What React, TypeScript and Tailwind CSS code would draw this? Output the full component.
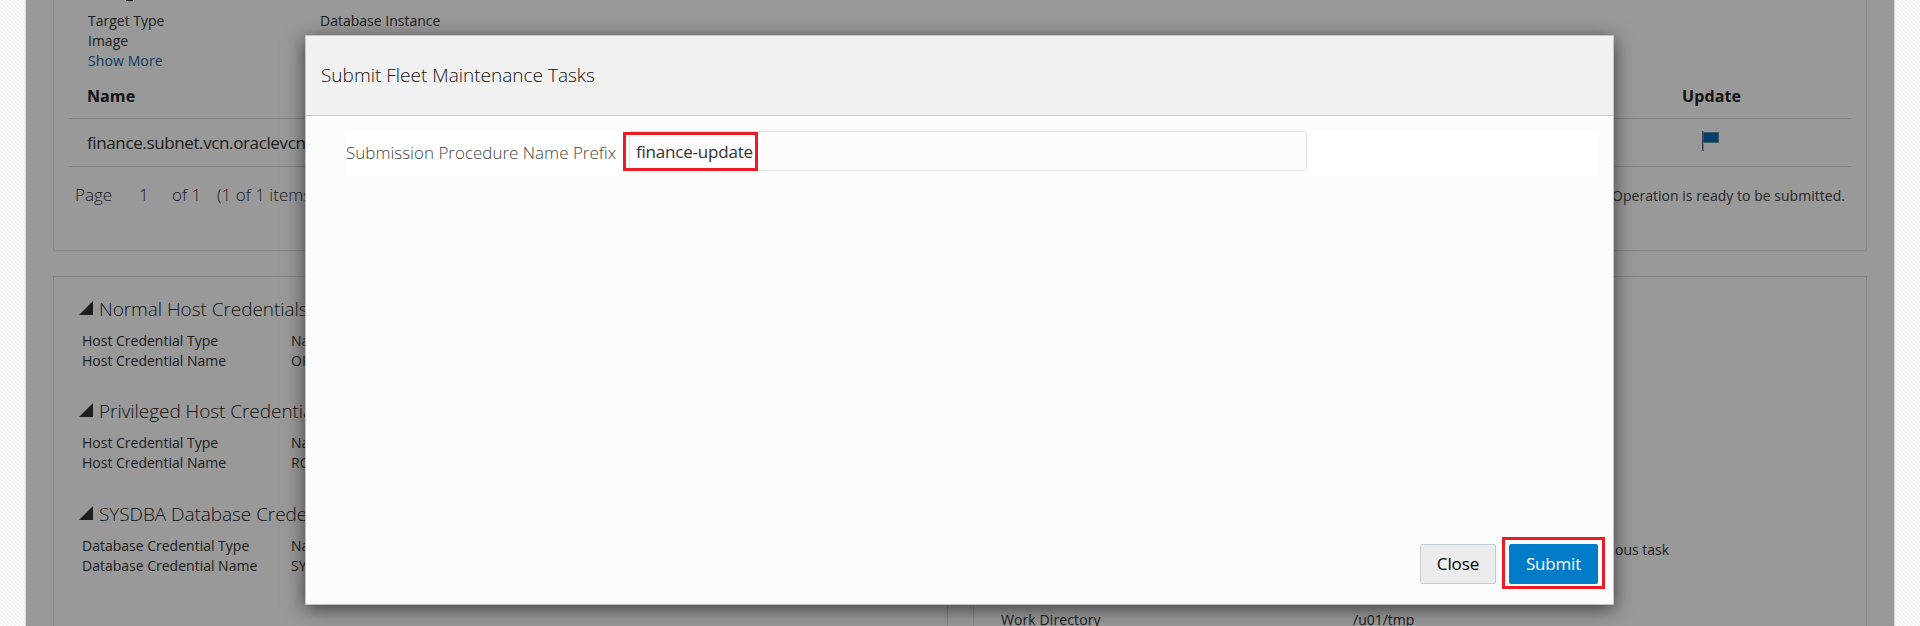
import React from "react";

type Pair = { label: string; value: string };

function Row({ label, value, labelWidth }: Pair & { labelWidth: string }) {
  return (
    <div className="flex h-5 text-[14px] leading-5 text-[#333]">
      <span className={`shrink-0 ${labelWidth}`}>{label}</span>
      <span>{value}</span>
    </div>
  );
}

function Section({ title, rows }: { title: string; rows: Pair[] }) {
  return (
    <section>
      <h2 className="flex h-7 items-center text-[19px] leading-7 font-light tracking-[-0.05px] text-[#222]">
        <svg className="mr-[6px] mb-[2px] h-[14px] w-[14px]" viewBox="0 0 14 14">
          <path d="M0 14L14 0V14Z" fill="#333" />
        </svg>
        {title}
      </h2>
      <div className="mt-2 pl-[3px]">
        {rows.map((r) => (
          <Row key={r.label} {...r} labelWidth="w-[209px]" />
        ))}
      </div>
    </section>
  );
}

function Flag() {
  return (
    <svg className="mb-[3px] h-5 w-[18px]" viewBox="0 0 18 20">
      <rect x="0" y="0" width="1.5" height="20" fill="#6b6292" />
      <rect x="1.5" y="1" width="15.5" height="11" fill="#6b97ad" />
      <rect x="1.5" y="2" width="14.5" height="9" fill="#006bb3" />
    </svg>
  );
}

function TargetPanel() {
  return (
    <div className="flex h-[251px] flex-col border border-t-0 border-[#e0e0e0] px-[15px]">
      <div className="ml-[57px] h-px w-[7px] bg-[#222]" />
      <div className="mt-[10px] pl-[19px]">
        <Row label="Target Type" value="Database Instance" labelWidth="w-[232px]" />
        <Row label="Image" value="" labelWidth="w-[232px]" />
        <a className="block h-5 text-[14px] leading-5 tracking-[0.1px] text-[#0f64a8]">Show More</a>
      </div>
      <div className="flex h-[48px] items-center border-b border-[#dcdcdc] pt-[2px] pr-[110px] pl-[18px] text-[16px] leading-6 font-bold tracking-[0.1px] text-[#222]">
        <span className="flex-1">Name</span>
        <span>Update</span>
      </div>
      <div className="flex h-[48px] items-center border-b border-[#dcdcdc] pr-[131px] pl-[18px] text-[17px] text-[#333]">
        <span className="flex-1 tracking-[-0.38px]">finance.subnet.vcn.oraclevcn</span>
        <Flag />
      </div>
      <div className="flex h-[56px] items-center pr-[6px] pl-[6px] text-[17px] font-light text-[#333]">
        <span className="w-16">Page</span>
        <span className="w-[33px]">1</span>
        <span className="w-[45px]">of 1</span>
        <span className="flex-1">(1 of 1 items)</span>
        <span className="text-[14px] font-normal tracking-[0.03px] text-[#444]">
          Operation is ready to be submitted.
        </span>
      </div>
    </div>
  );
}

function Dialog() {
  return (
    <div className="absolute top-[35px] left-[305px] flex h-[570px] w-[1309px] flex-col border border-[#c4c4c4] bg-[#fcfcfc] shadow-[0_4px_18px_rgba(0,0,0,0.6)]">
      <header className="flex h-[80px] items-center border-b border-[#c8c8c8] bg-[#f1f1f1] px-[15px] text-[19px] font-light text-[#111]">
        Submit Fleet Maintenance Tasks
      </header>
      <div className="mt-[15px] mr-[15px] ml-10 flex h-[45px] bg-white">
        <label className="w-[283px] shrink-0 pt-[10px] text-[17px] leading-6 font-light text-[#444]">
          Submission Procedure Name Prefix
        </label>
        <div className="relative h-10 w-[678px] rounded-[2px] border border-[#dfe4e7] bg-[#fcfcfc] px-[6px] pt-2 text-[17px] leading-6 tracking-[-0.2px] text-[#333]">
          finance-update
          <div className="absolute top-0 left-[-7px] h-[39px] w-[135px] border-3 border-[#ed1c24]" />
        </div>
      </div>
      <footer className="mt-auto mr-[15px] mb-[20px] flex justify-end gap-[13px]">
        <button className="h-10 w-[76px] rounded-[2px] border border-[#c4ced7] bg-[#ececec] text-[17px] tracking-[-0.1px] text-black">
          Close
        </button>
        <button className="relative h-10 w-[89px] rounded-[2px] bg-[#007bc8] text-[17px] tracking-[-0.2px] text-white">
          Submit
          <span className="absolute -top-[7px] -left-[7px] h-[52px] w-[103px] border-3 border-[#ed1c24]" />
        </button>
      </footer>
    </div>
  );
}

export default function App() {
  return (
    <div className="relative h-[626px] overflow-hidden bg-[#f8f8f8] bg-[linear-gradient(45deg,#f4f4f4_25%,#fafafa_25%,#fafafa_50%,#f4f4f4_50%,#f4f4f4_75%,#fafafa_75%)] bg-[size:4px_4px] px-[25px] font-['Open_Sans','Noto_Sans',sans-serif]">
      <main className="relative h-full border-x border-[#d6d6d6] bg-white pr-[27px] pl-[27px]">
        <TargetPanel />
        <div className="mt-[25px] flex justify-between">
          <div className="flex h-[360px] w-[895px] flex-col gap-[26px] border border-[#e0e0e0] px-[25px] pt-[18px]">
            <Section
              title="Normal Host Credentials"
              rows={[
                { label: "Host Credential Type", value: "Named" },
                { label: "Host Credential Name", value: "ORACLE" },
              ]}
            />
            <Section
              title="Privileged Host Credentials"
              rows={[
                { label: "Host Credential Type", value: "Named" },
                { label: "Host Credential Name", value: "ROOT" },
              ]}
            />
            <div className="pt-px">
              <Section
                title="SYSDBA Database Credentials"
                rows={[
                  { label: "Database Credential Type", value: "Named" },
                  { label: "Database Credential Name", value: "SYS" },
                ]}
              />
            </div>
          </div>
          <div className="h-[360px] w-[894px] border border-[#e0e0e0] px-[27px] pt-[263px]">
            <div className="pl-[614px] text-[14px] leading-5 text-[#333]">ous task</div>
            <div className="pt-[50px]">
              <Row label="Work Directory" value="/u01/tmp" labelWidth="w-[352px] tracking-[0.1px]" />
            </div>
          </div>
        </div>
        <div className="absolute inset-0 bg-black/40" />
      </main>
      <Dialog />
    </div>
  );
}
